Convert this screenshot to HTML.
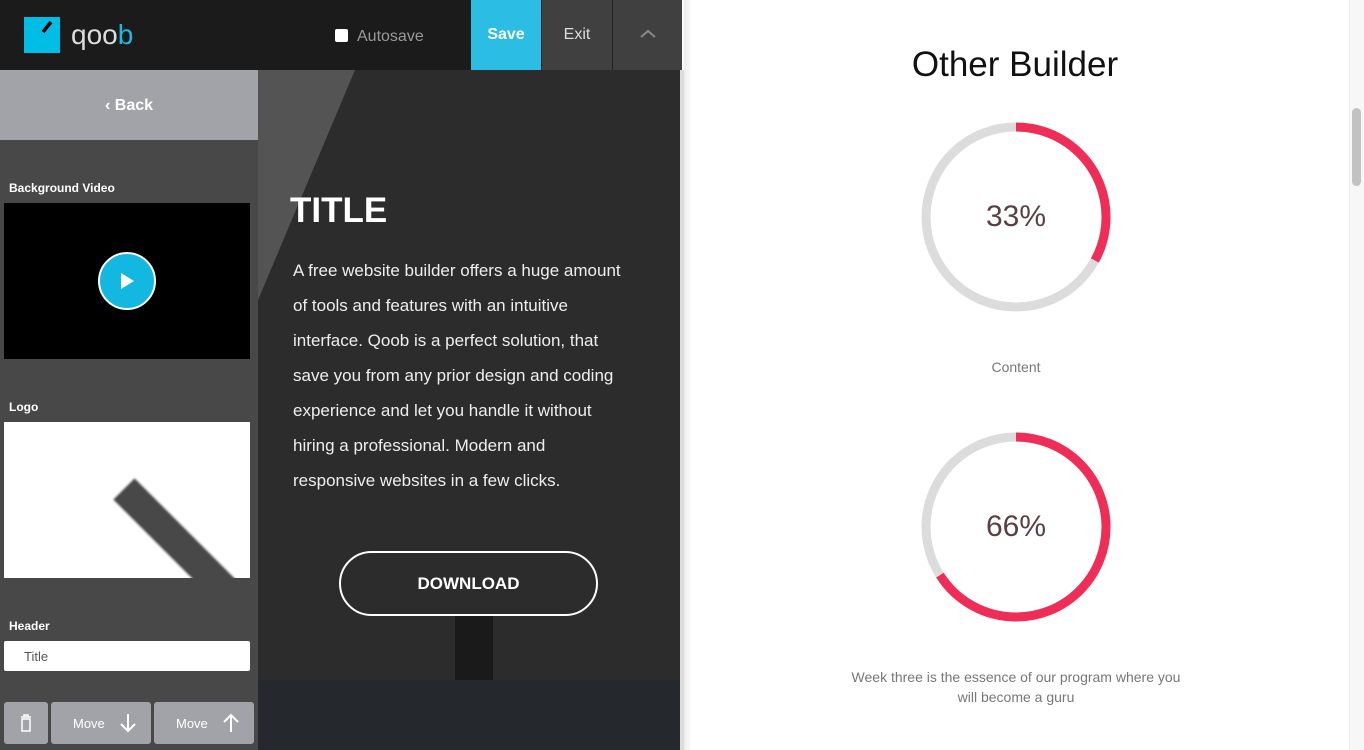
<!DOCTYPE html>
<html><head><meta charset="utf-8"><style>
*{margin:0;padding:0;box-sizing:border-box}
body{width:1364px;height:750px;overflow:hidden;background:#fff;font-family:"Liberation Sans",sans-serif;position:relative}
.abs{position:absolute}
</style></head><body>
<div class="abs" style="left:0;top:0;width:682px;height:70px;background:#1b1b1b"></div>
<svg class="abs" style="left:24px;top:17px" width="36" height="36"><rect width="36" height="36" fill="#00bde5"/><path d="M19 15 L27 5" stroke="#000" stroke-width="3.5"/></svg>
<div class="abs" style="left:71px;top:19px;font-size:28px;color:#ddd">qoo<span style="color:#1fb8e0">b</span></div>
<div class="abs" style="left:335px;top:29px;width:13px;height:13px;background:#fff;border-radius:2px"></div>
<div class="abs" style="left:357px;top:28px;font-size:16px;color:#999">Autosave</div>
<div class="abs" style="left:471px;top:0;width:70px;height:70px;background:#2bbde3;color:#fff;font-size:16px;font-weight:bold;text-align:center;line-height:70px">Save</div>
<div class="abs" style="left:541px;top:0;width:71px;height:70px;background:#404040;color:#ddd;font-size:16px;text-align:center;line-height:70px;border-left:1px solid #222">Exit</div>
<div class="abs" style="left:612px;top:0;width:70px;height:70px;background:#404040;border-left:1px solid #222"></div>
<svg class="abs" style="left:640px;top:29px" width="16" height="10"><path d="M1 8 L8 2 L15 8" stroke="#888" stroke-width="2" fill="none"/></svg>
<div class="abs" style="left:0;top:70px;width:258px;height:680px;background:#484848"></div>
<div class="abs" style="left:0;top:70px;width:258px;height:70px;background:#a2a3a8;color:#fff;font-weight:bold;font-size:16px;text-align:center;line-height:72px">‹ Back</div>
<div class="abs" style="left:9px;top:181px;font-size:12px;font-weight:bold;color:#fff">Background Video</div>
<div class="abs" style="left:4px;top:203px;width:246px;height:156px;background:#000"></div>
<div class="abs" style="left:98px;top:252px;width:58px;height:58px;border-radius:50%;background:#13b8e1;border:2px solid #fff"></div>
<svg class="abs" style="left:120px;top:272px" width="16" height="18"><path d="M1 1 L14 9 L1 17Z" fill="#fff"/></svg>
<div class="abs" style="left:9px;top:400px;font-size:12px;font-weight:bold;color:#fff">Logo</div>
<div class="abs" style="left:4px;top:422px;width:246px;height:156px;background:#fff;overflow:hidden">
<div class="abs" style="left:158px;top:45px;width:30px;height:150px;background:#484848;transform:rotate(-45deg);filter:blur(1px)"></div></div>
<div class="abs" style="left:9px;top:619px;font-size:12px;font-weight:bold;color:#fff">Header</div>
<div class="abs" style="left:4px;top:641px;width:246px;height:30px;background:#fff;border-radius:2px;font-size:13px;color:#555;line-height:31px;padding-left:20px">Title</div>
<div class="abs" style="left:4px;top:702px;width:44px;height:42px;background:#a2a3a8;border-radius:3px"></div>
<svg class="abs" style="left:20px;top:714px" width="12" height="18"><path d="M1 3 H11 M4 3 V1 H8 V3 M2 5 H10 V17 H2Z" stroke="#fff" stroke-width="1.5" fill="none"/></svg>
<div class="abs" style="left:51px;top:702px;width:100px;height:42px;background:#a2a3a8;border-radius:3px;color:#fff;font-size:13px;line-height:43px;padding-left:22px">Move</div>
<svg class="abs" style="left:119px;top:713px" width="18" height="20"><path d="M9 1 V18 M2 11 L9 18 L16 11" stroke="#fff" stroke-width="2" fill="none"/></svg>
<div class="abs" style="left:154px;top:702px;width:100px;height:42px;background:#a2a3a8;border-radius:3px;color:#fff;font-size:13px;line-height:43px;padding-left:22px">Move</div>
<svg class="abs" style="left:222px;top:713px" width="18" height="20"><path d="M9 19 V2 M2 9 L9 2 L16 9" stroke="#fff" stroke-width="2" fill="none"/></svg>
<div class="abs" style="left:258px;top:70px;width:422px;height:610px;background:#2c2c2c;overflow:hidden">
<div class="abs" style="left:0;top:0;width:0;height:0;border-top:230px solid #545454;border-right:97px solid transparent"></div>
<div class="abs" style="left:197px;top:545px;width:38px;height:65px;background:#1a1a1a"></div>
</div>
<div class="abs" style="left:290px;top:191px;font-size:35px;font-weight:bold;color:#fff">TITLE</div>
<div class="abs" style="left:293px;top:253px;font-size:17px;line-height:35px;color:#eee;white-space:nowrap">A free website builder offers a huge amount<br>of tools and features with an intuitive<br>interface. Qoob is a perfect solution, that<br>save you from any prior design and coding<br>experience and let you handle it without<br>hiring a professional. Modern and<br>responsive websites in a few clicks.</div>
<div class="abs" style="left:339px;top:551px;width:259px;height:65px;border:2px solid #fff;border-radius:33px;color:#fff;font-size:17px;font-weight:bold;text-align:center;line-height:61px">DOWNLOAD</div>
<div class="abs" style="left:258px;top:680px;width:422px;height:70px;background:#25292e"></div>
<div class="abs" style="left:680px;top:70px;width:4px;height:680px;background:#ddd"></div>
<div class="abs" style="left:684px;top:0;width:8px;height:750px;background:linear-gradient(to right,rgba(0,0,0,.08),rgba(0,0,0,0))"></div>
<div class="abs" style="left:860px;top:45px;width:310px;text-align:center;font-size:35px;color:#111">Other Builder</div>
<svg class="abs" style="left:916px;top:117px" width="200" height="200"><circle cx="100" cy="100" r="90" stroke="#dcdcdc" stroke-width="9" fill="none"/><circle cx="100" cy="100" r="90" stroke="#ef2d56" stroke-width="9" fill="none" stroke-dasharray="186.6 1000" transform="rotate(-90 100 100)"/></svg>
<div class="abs" style="left:916px;top:200px;width:200px;text-align:center;font-size:30px;color:#5a3f44">33%</div>
<div class="abs" style="left:916px;top:359px;width:200px;text-align:center;font-size:14px;color:#777">Content</div>
<svg class="abs" style="left:916px;top:427px" width="200" height="200"><circle cx="100" cy="100" r="90" stroke="#dcdcdc" stroke-width="9" fill="none"/><circle cx="100" cy="100" r="90" stroke="#ef2d56" stroke-width="9" fill="none" stroke-dasharray="373.2 1000" transform="rotate(-90 100 100)"/></svg>
<div class="abs" style="left:916px;top:510px;width:200px;text-align:center;font-size:30px;color:#5a3f44">66%</div>
<div class="abs" style="left:846px;top:667px;width:340px;text-align:center;font-size:14px;line-height:20px;color:#777">Week three is the essence of our program where you will become a guru</div>
<div class="abs" style="left:1349px;top:0;width:15px;height:750px;background:#f7f7f7;border-left:1px solid #eee"></div>
<div class="abs" style="left:1352px;top:108px;width:9px;height:78px;background:#c2c2c2;border-radius:5px"></div>
</body></html>
